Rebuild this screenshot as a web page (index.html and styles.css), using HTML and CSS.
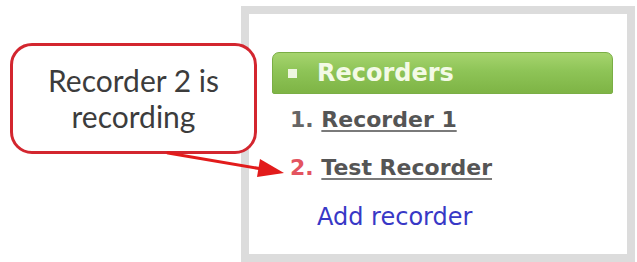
FILE: index.html
```html
<!DOCTYPE html>
<html>
<head>
<meta charset="utf-8">
<link rel="stylesheet" href="styles.css">
</head>
<body>
<div class="stage">
  <div class="panel">
    <div class="panel-head"><span class="bullet"></span><span class="panel-title">Recorders</span></div>
    <ul class="rec-list">
      <li class="rec-item"><span class="num">1.</span> <a class="rec-link" href="#">Recorder 1</a></li>
      <li class="rec-item active"><span class="num">2.</span> <a class="rec-link" href="#">Test Recorder</a></li>
      <li class="rec-add"><a class="add-link" href="#">Add recorder</a></li>
    </ul>
  </div>
  <div class="callout">Recorder 2 is<br>recording</div>
  <svg class="arrow" width="637" height="262" viewBox="0 0 637 262">
    <line x1="168" y1="153" x2="262" y2="169" stroke="#e21b1b" stroke-width="3" stroke-linecap="round"/>
    <polygon points="284,173 260,159 257,177" fill="#e21b1b"/>
  </svg>
</div>
</body>
</html>
```

FILE: styles.css
```css
html, body {
  margin: 0;
  padding: 0;
  background: #ffffff;
}
.stage {
  position: relative;
  width: 637px;
  height: 262px;
  overflow: hidden;
}
.panel {
  box-sizing: border-box;
  margin: 6px 0 0 241px;
  width: 394px;
  height: 256px;
  border: 8px solid #dcdcdc;
  background: #ffffff;
  padding-top: 38px;
}
.panel-head {
  margin: 0 14px 0 23px;
  height: 39px;
  padding: 1px 0 0 15px;
  border: 1px solid #7aae45;
  border-radius: 7px 7px 2px 2px;
  background: linear-gradient(#a6d46e, #8ec457 45%, #7eb445);
  display: flex;
  align-items: center;
  box-sizing: content-box;
}
.bullet {
  width: 9px;
  height: 9px;
  background: #eef6df;
  margin-right: 20px;
  flex: none;
}
.panel-title {
  font-family: "DejaVu Sans", Verdana, sans-serif;
  font-weight: bold;
  font-size: 24px;
  line-height: 39px;
  color: #f3fae6;
}
.rec-list {
  list-style: none;
  margin: 2px 0 0 0;
  padding: 0;
}
.rec-item {
  font-family: "DejaVu Sans", Verdana, sans-serif;
  font-weight: bold;
  font-size: 22px;
  line-height: 48px;
  padding-left: 41px;
  color: #666666;
}
.rec-item.active .num {
  color: #e35460;
}
.rec-link {
  color: #555555;
  text-decoration: underline;
  text-decoration-color: #7a7a7a;
  text-decoration-thickness: 2px;
  text-underline-offset: 3px;
}
.rec-add {
  font-family: "DejaVu Sans", Verdana, sans-serif;
  font-size: 24px;
  line-height: 48px;
  padding-left: 68px;
  margin-top: 1px;
}
.add-link {
  color: #3838c6;
  text-decoration: none;
}
.callout {
  position: absolute;
  left: 10px;
  top: 43px;
  box-sizing: border-box;
  width: 247px;
  height: 111px;
  border: 3px solid #d3262f;
  border-radius: 22px;
  background: #ffffff;
  padding-top: 16px;
  text-align: center;
  font-family: Lato, "Open Sans", sans-serif;
  font-size: 30px;
  line-height: 36px;
  color: #3c3c3c;
}
.arrow {
  position: absolute;
  left: 0;
  top: 0;
  pointer-events: none;
}
```
